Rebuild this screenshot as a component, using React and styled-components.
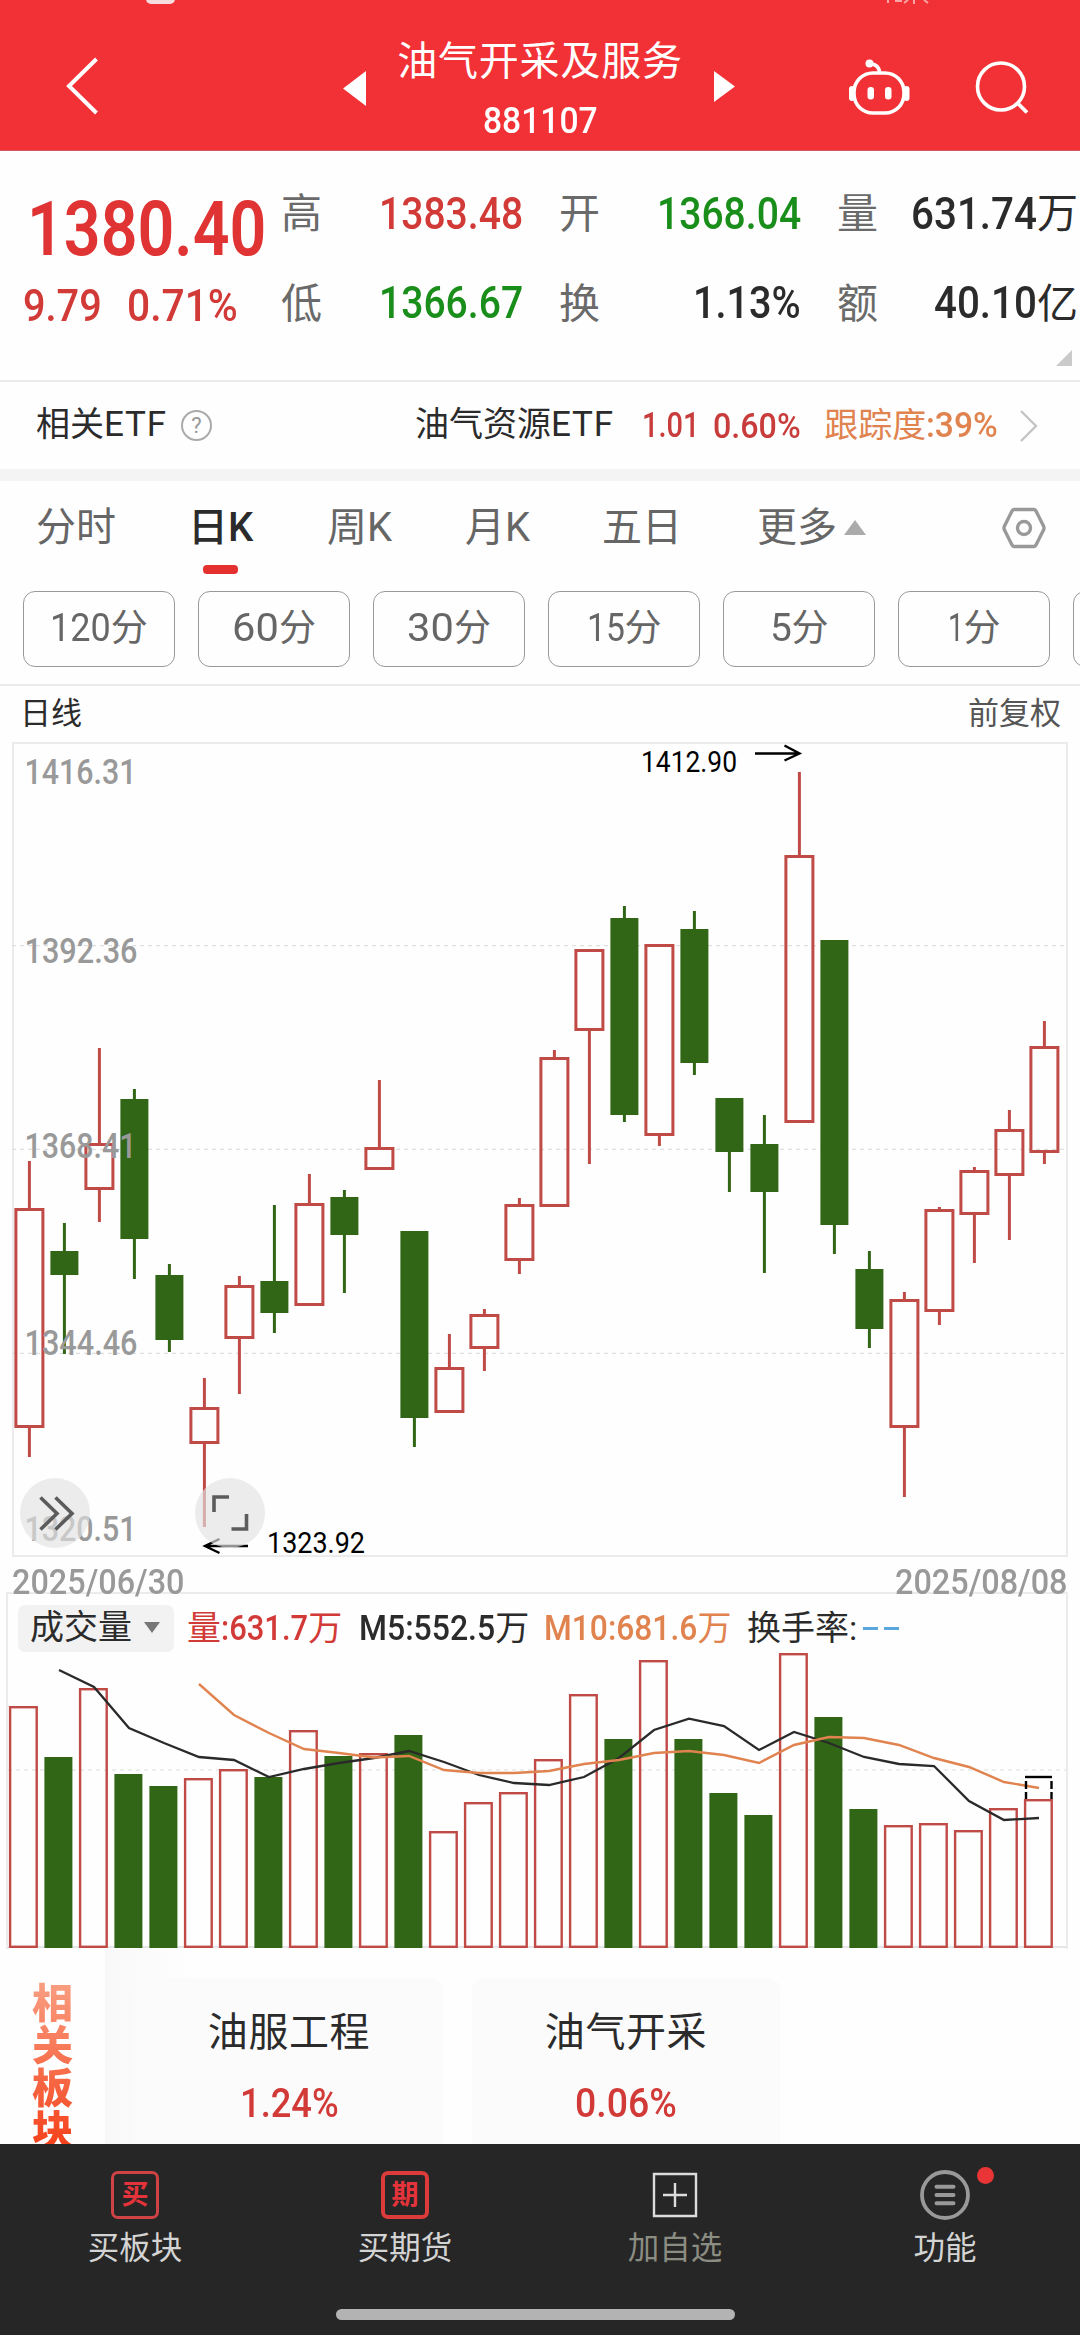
import styled, { createGlobalStyle } from 'styled-components'

const RED = '#d23a38'
const CANDLE_RED = '#c04a45'
const GREEN = '#1a8e1a'
const CANDLE_GREEN = '#306615'
const ORANGE = '#e0834f'
const STEP = 35

// type, high, top, bottom, low
const candles = [
    ['up', 1161, 1208, 1428, 1457],
    ['down', 1223, 1251, 1275, 1354],
    ['up', 1048, 1143, 1190, 1222],
    ['down', 1089, 1099, 1239, 1279],
    ['down', 1264, 1275, 1340, 1352],
    ['up', 1378, 1407, 1444, 1527],
    ['up', 1276, 1285, 1339, 1394],
    ['down', 1205, 1281, 1313, 1333],
    ['up', 1174, 1203, 1306, 1306],
    ['down', 1190, 1197, 1235, 1293],
    ['up', 1080, 1147, 1170, 1170],
    ['down', 1231, 1231, 1418, 1447],
    ['up', 1334, 1367, 1413, 1413],
    ['up', 1309, 1314, 1349, 1371],
    ['up', 1198, 1204, 1261, 1274],
    ['up', 1050, 1057, 1207, 1207],
    ['up', 949, 949, 1031, 1164],
    ['down', 906, 918, 1115, 1122],
    ['up', 944, 944, 1136, 1146],
    ['down', 911, 929, 1063, 1075],
    ['down', 1098, 1098, 1152, 1192],
    ['down', 1115, 1144, 1192, 1273],
    ['up', 772, 855, 1123, 1123],
    ['down', 940, 940, 1225, 1254],
    ['down', 1251, 1269, 1329, 1348],
    ['up', 1292, 1299, 1428, 1497],
    ['up', 1207, 1209, 1312, 1325],
    ['up', 1167, 1170, 1215, 1263],
    ['up', 1110, 1129, 1176, 1240],
    ['up', 1021, 1046, 1153, 1164],
]

const volumes = [
    1706, 1757, 1688, 1774, 1786, 1778, 1769, 1777, 1730, 1756, 1753, 1735,
    1831, 1802, 1792, 1759, 1694, 1739, 1660, 1739, 1793, 1815, 1653, 1717,
    1809, 1825, 1823, 1830, 1808, 1799,
]

const m5 = [
    1670, 1687, 1728, 1743, 1757, 1760, 1777, 1769, 1763, 1758, 1751, 1762,
    1775, 1783, 1785, 1777, 1758, 1730, 1718.7, 1726, 1750, 1732, 1743, 1757,
    1764, 1766, 1801, 1820, 1818,
]

const m10 = [
    1684, 1715, 1733, 1749, 1753, 1757.5, 1756, 1770, 1773, 1773, 1771, 1764,
    1760, 1753, 1751, 1755, 1763, 1745, 1737, 1738, 1745, 1758, 1767, 1782,
    1788,
]

const priceLabels = [
    ['1416.31', 784, 112],
    ['1392.36', 963, 113],
    ['1368.41', 1158, 112],
    ['1344.46', 1355, 113],
    ['1320.51', 1541, 112],
]

const quotes = [
    { label: '高', value: '1383.48', width: 143, color: RED },
    { label: '开', value: '1368.04', width: 143, color: GREEN },
    { label: '量', value: '631.74', width: 125, unit: '万', color: '#2b2b2b' },
    { label: '低', value: '1366.67', width: 143, color: GREEN },
    { label: '换', value: '1.13%', width: 107, color: '#2b2b2b' },
    { label: '额', value: '40.10', width: 102, unit: '亿', color: '#2b2b2b' },
]

const tabs = [
    ['分时', 152],
    ['日K', 139],
    ['周K', 138],
    ['月K', 137],
    ['五日', 155],
    ['更多', 87],
]

const periods = [
    ['120', 61],
    ['60', 47],
    ['30', 47],
    ['15', 38],
    ['5', 22],
    ['1', 16],
    ['', 0],
]

const sectors = [
    ['油服工程', '1.24%', 98],
    ['油气开采', '0.06%', 101],
]

// digit advances of Roboto, in em
const advances = { '.': 0.27, '%': 0.735, '/': 0.38, ':': 0.25, ' ': 0.25, M: 0.876 }

// a condensed number: drawn at its natural width, then squeezed to `width`
const Figure = ({ children, size, width, color, weight }) => {
    const natural =
        size *
        [...children].reduce((sum, c) => sum + (advances[c] || 0.565), 0)
    return (
        <Squeezed
            $size={size}
            $color={color}
            $weight={weight}
            $scale={width / natural}
            $slack={width - natural}
        >
            {children}
        </Squeezed>
    )
}

// moving average points, `from` is the index of the first one
const average = (values, from, top) =>
    values.map((y, i) => `${24 + (i + from) * STEP},${y - top}`).join(' ')

const PriceChart = () => (
    <svg width="1056" height="815" viewBox="12 742 1056 815">
        <rect x="13" y="743" width="1054" height="813" fill="none" stroke="#ebebeb" strokeWidth="2" />
        {[945.7, 1149.3, 1353.3].map((y) => (
            <line key={y} x1="12" x2="1066" y1={y} y2={y} stroke="#dfdfdf" strokeWidth="1.2" strokeDasharray="4 4" />
        ))}
        {candles.map(([type, high, top, bottom, low], i) => {
            const x = 29.4 + i * STEP
            const color = type === 'up' ? CANDLE_RED : CANDLE_GREEN
            return (
                <g key={i} stroke={color} strokeWidth="3">
                    {high < top && <line x1={x} x2={x} y1={high} y2={top + 1} />}
                    {low > bottom && <line x1={x} x2={x} y1={bottom - 1} y2={low} />}
                    {type === 'up' ? (
                        <rect x={x - 13.5} y={top + 1.5} width="27" height={bottom - top - 3} fill="none" />
                    ) : (
                        <rect x={x - 14} y={top} width="28" height={bottom - top} fill={color} stroke="none" />
                    )}
                </g>
            )
        })}
        {priceLabels.map(([text, y, width]) => (
            <AxisText key={text} x="24.5" y={y} textLength={width} lengthAdjust="spacingAndGlyphs">
                {text}
            </AxisText>
        ))}
        <g fill="none" stroke="#000" strokeWidth="2.4">
            <path d="M755 753.5H799M784.5 745.5L799.5 753.5L784.5 760.5" />
            <path d="M248 1546H205M219.5 1539L205 1546L219.5 1553" />
        </g>
        <PeakText x="641" y="772" textLength="96" lengthAdjust="spacingAndGlyphs">1412.90</PeakText>
        <PeakText x="267" y="1553" textLength="98" lengthAdjust="spacingAndGlyphs">1323.92</PeakText>
        <circle cx="55" cy="1513" r="35" fill="rgba(226,226,226,.65)" />
        <circle cx="230" cy="1513" r="35" fill="rgba(226,226,226,.65)" />
        <g fill="none" stroke="#5c5c5c" strokeWidth="3.6">
            <path d="M40.5 1497.5L57 1513.5L40.5 1529.5M55.5 1497.5L72 1513.5L55.5 1529.5" />
            <path d="M214 1512V1497H229M246.5 1514V1529H231.5" />
        </g>
    </svg>
)

// the drawing starts right below the indicator bar
const VolumeChart = () => {
    const top = 1652
    return (
        <svg width="1058" height="297" viewBox="8 0 1058 297">
            <line x1="8" x2="1066" y1="118" y2="118" stroke="#e8e8e8" strokeWidth="1.6" strokeDasharray="4 4" />
            <line x1="8" x2="1066" y1="295" y2="295" stroke="#e6e6e6" strokeWidth="2" />
            {volumes.map((y, i) => {
                const x = 23.4 + i * STEP
                return candles[i][0] === 'up' ? (
                    <rect
                        key={i}
                        x={x - 13.3}
                        y={y - top + 1.2}
                        width="26.6"
                        height={1948 - y - 2.4}
                        fill="none"
                        stroke={CANDLE_RED}
                        strokeWidth="2.4"
                    />
                ) : (
                    <rect key={i} x={x - 14} y={y - top} width="28" height={1948 - y} fill={CANDLE_GREEN} />
                )
            })}
            <polyline points={average(m5, 1, top)} fill="none" stroke="#2a2a2a" strokeWidth="2.3" />
            <polyline points={average(m10, 5, top)} fill="none" stroke={ORANGE} strokeWidth="2.4" />
            <g stroke="#000" strokeWidth="2.4">
                <path d="M1025 125H1052" />
                <path d="M1026 129V137M1026 140V147M1051.5 129V137M1051.5 140V147" />
            </g>
        </svg>
    )
}

const App = () => (
    <Page>
        <GlobalStyle />
        <Header>
            <svg width="1080" height="6">
                <rect x="146" y="-8" width="29" height="12" rx="5" fill="#f6dcdc" />
                <path d="M888 0V3M895 1H902M908 0L904 3M914 0V4M924 0L928 3" stroke="#f7a5a6" strokeWidth="2" />
            </svg>
            <HeaderBar>
                <BackButton>
                    <svg width="34" height="58" viewBox="0 0 34 58">
                        <path d="M31.5 2L4 29L31.5 56" fill="none" stroke="#fff" strokeWidth="4" />
                    </svg>
                </BackButton>
                <Switcher>
                    <svg width="23" height="36">
                        <path d="M23 0V35L0 17.5Z" fill="#fff" />
                    </svg>
                    <Titles>
                        <h1>油气开采及服务</h1>
                        <Figure size={37} width={114} color="#fff">
                            881107
                        </Figure>
                    </Titles>
                    <svg width="21" height="32">
                        <path d="M0 0V31L21 15.5Z" fill="#fff" />
                    </svg>
                </Switcher>
                <HeaderIcons>
                    <svg width="62" height="58" viewBox="848 58 62 58">
                        <g fill="none" stroke="#fff" strokeWidth="3.6">
                            <rect x="854" y="73" width="50" height="40" rx="19" />
                            <path d="M869 63.5C875 64 879.5 67 879.5 73" />
                        </g>
                        <circle cx="869.5" cy="63.5" r="4" fill="#fff" />
                        <rect x="849" y="86" width="6" height="15" rx="3" fill="#fff" />
                        <rect x="903.5" y="86" width="6" height="15" rx="3" fill="#fff" />
                        <rect x="867.5" y="87" width="6.5" height="12.5" rx="3" fill="#fff" />
                        <rect x="885" y="87" width="6.5" height="12.5" rx="3" fill="#fff" />
                    </svg>
                    <svg width="54" height="54" viewBox="975 60 54 54">
                        <circle cx="1001" cy="86.5" r="23.5" fill="none" stroke="#fff" strokeWidth="3.6" />
                        <path d="M1017.5 103L1027 112.5" stroke="#fff" strokeWidth="3.8" />
                    </svg>
                </HeaderIcons>
            </HeaderBar>
        </Header>

        <Quote>
            <Price>
                <Figure size={76} width={236} color="#e03333" weight={600}>
                    1380.40
                </Figure>
                <Change>
                    <Figure size={43.5} width={78} color={RED}>
                        9.79
                    </Figure>
                    <Figure size={43.5} width={110} color={RED}>
                        0.71%
                    </Figure>
                </Change>
            </Price>
            <Stats>
                {quotes.map((q) => (
                    <Stat key={q.label}>
                        <span>{q.label}</span>
                        <StatValue $color={q.color}>
                            <Figure size={44.5} width={q.width} color={q.color}>
                                {q.value}
                            </Figure>
                            {q.unit}
                        </StatValue>
                    </Stat>
                ))}
            </Stats>
            <Corner />
        </Quote>

        <EtfRow>
            <EtfLabel>
                相关<b>ETF</b>
            </EtfLabel>
            <Help>?</Help>
            <EtfName>
                油气资源<b>ETF</b>
            </EtfName>
            <Figure size={35} width={57} color="#c83c3c">
                1.01
            </Figure>
            <EtfRate>
                <Figure size={35} width={87} color="#c83c3c">
                    0.60%
                </Figure>
            </EtfRate>
            <Tracking>
                跟踪度
                <Figure size={35} width={71} color={ORANGE}>
                    :39%
                </Figure>
            </Tracking>
            <svg width="20" height="32">
                <path d="M2 1L17 16L2 31" fill="none" stroke="#c4c4c4" strokeWidth="2.4" />
            </svg>
        </EtfRow>

        <Tabs>
            {tabs.map(([name, width], i) => (
                <Tab key={name} $width={width} $active={i === 1}>
                    {name}
                </Tab>
            ))}
            <Triangle $size={11} $height={15} $color="#ababab" $up />
            <Settings width="44" height="44" viewBox="1002 506 44 44">
                <path
                    d="M1014 509.5H1034Q1035 509.5 1036 511L1043.5 526Q1044.5 528 1043.5 530L1036 545Q1035 546.5 1034 546.5H1014Q1013 546.5 1012 545L1004.5 530Q1003.5 528 1004.5 526L1012 511Q1013 509.5 1014 509.5Z"
                    fill="none"
                    stroke="#999"
                    strokeWidth="3.4"
                />
                <circle cx="1024" cy="528" r="6.5" fill="none" stroke="#999" strokeWidth="3.4" />
            </Settings>
        </Tabs>

        <Periods>
            {periods.map(([n, width]) => (
                <Period key={n}>
                    {n && (
                        <>
                            <Figure size={39} width={width} color="#666" weight={400}>
                                {n}
                            </Figure>
                            分
                        </>
                    )}
                </Period>
            ))}
        </Periods>

        <ChartCaption>
            <span>日线</span>
            <em>前复权</em>
        </ChartCaption>
        <PriceArea>
            <PriceChart />
        </PriceArea>
        <Dates>
            <Figure size={35} width={171} color="#999">
                2025/06/30
            </Figure>
            <Figure size={35} width={171} color="#999">
                2025/08/08
            </Figure>
        </Dates>

        <VolumePanel>
            <Indicators>
                <Picker>
                    成交量
                    <Triangle $size={8} $height={11} $color="#777" />
                </Picker>
                <Indicator $width={172} $color={RED}>
                    量
                    <Figure size={35} width={86} color={RED}>
                        :631.7
                    </Figure>
                    万
                </Indicator>
                <Indicator $width={185} $color="#2b2b2b">
                    <Figure size={35} width={135} color="#2b2b2b">
                        M5:552.5
                    </Figure>
                    万
                </Indicator>
                <Indicator $width={203} $color={ORANGE}>
                    <Figure size={35} width={152} color={ORANGE}>
                        M10:681.6
                    </Figure>
                    万
                </Indicator>
                <Indicator $width={116} $color="#2b2b2b">
                    换手率:
                </Indicator>
                <Dash />
                <Dash />
            </Indicators>
            <VolumeChart />
        </VolumePanel>

        <Related>
            <RelatedTitle>
                {[...'相关板块'].map((c) => (
                    <span key={c}>{c}</span>
                ))}
            </RelatedTitle>
            <Sectors>
                {sectors.map(([name, rate, width]) => (
                    <Sector key={name}>
                        <h2>{name}</h2>
                        <Figure size={40.5} width={width} color={RED}>
                            {rate}
                        </Figure>
                    </Sector>
                ))}
            </Sectors>
        </Related>

        <Footer>
            <Nav>
                <NavItem>
                    <Stamp $color="#cf4345" $line={3}>
                        买
                    </Stamp>
                    买板块
                </NavItem>
                <NavItem>
                    <Stamp $color="#dc3b3b" $line={4}>
                        期
                    </Stamp>
                    买期货
                </NavItem>
                <NavItem $dim>
                    <svg width="50" height="50">
                        <path d="M4 4H46V46H4ZM25 13V37M13 25H37" fill="none" stroke="#dcdcdc" strokeWidth="2.4" />
                    </svg>
                    加自选
                </NavItem>
                <NavItem>
                    <Dot />
                    <svg width="50" height="50">
                        <circle cx="25" cy="25" r="23" fill="none" stroke="#999" strokeWidth="3.8" />
                        <path d="M16.5 16.7H33.5M16.5 25H33.5M16.5 33.3H33.5" stroke="#999" strokeWidth="4" strokeLinecap="round" />
                    </svg>
                    功能
                </NavItem>
            </Nav>
            <HomeBar />
        </Footer>
    </Page>
)

const GlobalStyle = createGlobalStyle`
    * {
        box-sizing: border-box;
    }
    body {
        margin: 0;
        background: #fff;
        font-family: Roboto, "Noto Sans CJK SC", sans-serif;
    }
    h1, h2 {
        margin: 0;
        font-weight: 400;
    }
    svg {
        display: block;
        flex: none;
    }
`
const Page = styled.div`
    width: 1080px;
    height: 2335px;
    overflow: hidden;
    background: #fefefe;
    display: flex;
    flex-direction: column;
    > * {
        flex: none;
    }
`
const Squeezed = styled.span`
    display: inline-block;
    white-space: pre;
    line-height: 1;
    font-family: Roboto, sans-serif;
    font-size: ${(p) => p.$size}px;
    font-weight: ${(p) => p.$weight || 500};
    color: ${(p) => p.$color};
    transform: scaleX(${(p) => p.$scale});
    transform-origin: left center;
    margin-right: ${(p) => p.$slack}px;
`
const AxisText = styled.text`
    font-family: Roboto, sans-serif;
    font-size: 35px;
    font-weight: 500;
    fill: #999;
`
const PeakText = styled.text`
    font-family: Roboto, sans-serif;
    font-size: 30px;
    fill: #000;
`
const Header = styled.header`
    height: 151px;
    background: #f23136;
    border-bottom: 1px solid #d05a5c;
`
const HeaderBar = styled.div`
    height: 144px;
    display: grid;
    grid-template-columns: 340px 400px 1fr;
`
const BackButton = styled.div`
    padding: 51px 0 0 65px;
`
const Switcher = styled.div`
    display: flex;
    justify-content: space-between;
    padding: 0 5px 0 3px;
    > svg {
        margin-top: 65px;
    }
`
const Titles = styled.div`
    display: flex;
    flex-direction: column;
    align-items: center;
    padding-top: 31px;
    h1 {
        font-size: 40px;
        line-height: 50px;
        letter-spacing: 0.8px;
        color: #fff;
        margin-bottom: 15px;
    }
`
const HeaderIcons = styled.div`
    display: flex;
    padding: 52px 0 0 108px;
    gap: 65px;
    svg:last-child {
        margin-top: 2px;
    }
`
const Quote = styled.section`
    height: 231px;
    position: relative;
    display: flex;
    border-bottom: 2px solid #ececec;
`
const Price = styled.div`
    width: 281px;
    padding: 40px 0 0 27px;
`
const Change = styled.div`
    display: flex;
    gap: 25px;
    margin: 18px 0 0 -4px;
`
const Stats = styled.div`
    width: 799px;
    height: 182px;
    padding-top: 18px;
    display: grid;
    grid-template-columns: 242px 242px 241px;
    grid-template-rows: 89.5px 89.5px;
    column-gap: 36px;
`
const Stat = styled.div`
    height: 90px;
    display: flex;
    justify-content: space-between;
    align-items: center;
    font-size: 41px;
    line-height: 90px;
    color: #6a6a6a;
`
const StatValue = styled.div`
    display: flex;
    align-items: center;
    color: ${(p) => p.$color};
`
const Corner = styled.i`
    position: absolute;
    right: 8px;
    bottom: 14px;
    border-left: 16px solid transparent;
    border-bottom: 16px solid #cacaca;
`
const EtfRow = styled.section`
    height: 99px;
    display: flex;
    align-items: center;
    padding-left: 36px;
    border-bottom: 12px solid #f4f4f4;
    font-size: 34px;
    line-height: 50px;
    color: #2b2b2b;
    b {
        font-weight: 400;
        font-size: 35px;
        letter-spacing: 0.8px;
    }
`
const EtfLabel = styled.div`
    width: 145px;
    padding-bottom: 2px;
    white-space: nowrap;
`
const Help = styled.div`
    width: 31px;
    height: 31px;
    border: 2px solid #aaa;
    border-radius: 50%;
    font-size: 22px;
    line-height: 27px;
    text-align: center;
    color: #999;
`
const EtfName = styled.div`
    width: 227px;
    margin-left: 203px;
    padding-bottom: 2px;
    white-space: nowrap;
`
const EtfRate = styled.div`
    margin: 0 24px 0 13px;
`
const Tracking = styled.div`
    width: 195px;
    padding-bottom: 1px;
    display: flex;
    align-items: center;
    color: ${ORANGE};
`
const Triangle = styled.i`
    flex: none;
    border-left: ${(p) => p.$size}px solid transparent;
    border-right: ${(p) => p.$size}px solid transparent;
    ${(p) => (p.$up ? 'border-bottom' : 'border-top')}: ${(p) =>
        `${p.$height}px solid ${p.$color}`};
`
const Tabs = styled.nav`
    height: 110px;
    display: flex;
    align-items: center;
    padding: 0 34px 17px 36px;
`
const Tab = styled.div`
    width: ${(p) => p.$width}px;
    font-size: 40px;
    line-height: 60px;
    font-weight: ${(p) => (p.$active ? 500 : 400)};
    color: ${(p) => (p.$active ? '#2b2b2b' : '#666')};
    position: relative;
    &::after {
        content: '';
        display: ${(p) => (p.$active ? 'block' : 'none')};
        position: absolute;
        left: 15px;
        bottom: -16px;
        width: 35px;
        height: 9px;
        border-radius: 4px;
        background: #e53030;
    }
`
const Settings = styled.svg`
    margin-left: auto;
`
const Periods = styled.div`
    height: 95px;
    padding-left: 23px;
    display: flex;
    gap: 23px;
    overflow: hidden;
    border-bottom: 2px solid #ececec;
`
const Period = styled.div`
    flex: none;
    width: 152px;
    height: 76px;
    border: 1.5px solid #999;
    border-radius: 12px;
    display: flex;
    align-items: center;
    justify-content: center;
    font-size: 37px;
    line-height: 50px;
    color: #666;
    padding-bottom: 1px;
`
const ChartCaption = styled.div`
    height: 56px;
    padding: 0 19px 0 20px;
    display: flex;
    justify-content: space-between;
    font-size: 31px;
    line-height: 56px;
    color: #2b2b2b;
    em {
        font-style: normal;
        color: #555;
    }
`
const PriceArea = styled.div`
    height: 815px;
    padding-left: 12px;
`
const Dates = styled.div`
    height: 35px;
    padding: 8px 12px 0 12px;
    display: flex;
    justify-content: space-between;
`
const VolumePanel = styled.section`
    height: 357px;
    margin: 0 12px 0 6px;
    border: 2px solid #ebebeb;
    border-bottom: none;
`
const Indicators = styled.div`
    height: 58px;
    display: flex;
    align-items: center;
    padding: 10px 0 0 10px;
`
const Picker = styled.div`
    width: 156px;
    height: 47px;
    margin-right: 13px;
    border-radius: 7px;
    background: #f2f2f2;
    display: flex;
    align-items: center;
    justify-content: space-between;
    padding: 0 14px 2px 12px;
    font-size: 34px;
    line-height: 45px;
    color: #2b2b2b;
`
const Indicator = styled.div`
    width: ${(p) => p.$width}px;
    display: flex;
    align-items: center;
    font-size: 34px;
    line-height: 46px;
    color: ${(p) => p.$color};
    white-space: nowrap;
`
const Dash = styled.i`
    width: 15px;
    height: 3px;
    margin-right: 6px;
    background: #5aa7dd;
`
const Related = styled.section`
    height: 195px;
    display: flex;
    overflow: hidden;
`
const RelatedTitle = styled.div`
    width: 105px;
    height: 237px;
    padding: 34px 0 0 32px;
    display: flex;
    flex-direction: column;
    font-size: 41px;
    line-height: 42.3px;
    font-weight: 900;
    background: linear-gradient(#f9a083 30px, #f5431c 195px);
    background-clip: text;
    color: transparent;
`
const Sectors = styled.div`
    flex: 1;
    display: flex;
    gap: 29px;
    padding: 29px 0 0 30px;
    background: linear-gradient(90deg, #f8f8f8, #fefefe 85px);
`
const Sector = styled.div`
    width: 308px;
    height: 200px;
    border-radius: 12px;
    background: #fbfbfb;
    display: flex;
    flex-direction: column;
    align-items: center;
    padding-top: 25px;
    h2 {
        font-size: 40px;
        line-height: 60px;
        letter-spacing: 0.6px;
        color: #2b2b2b;
        margin-bottom: 20px;
    }
`
const Footer = styled.footer`
    height: 191px;
    background: #262626;
`
const Nav = styled.nav`
    height: 165px;
    display: grid;
    grid-template-columns: repeat(4, 1fr);
`
const NavItem = styled.div`
    position: relative;
    display: flex;
    flex-direction: column;
    align-items: center;
    gap: 6px;
    padding-top: 26px;
    font-size: 31.5px;
    line-height: 46px;
    color: ${(p) => (p.$dim ? '#8c8d82' : '#d4d4d4')};
`
const Stamp = styled.div`
    width: 48px;
    height: 48px;
    margin: 1px;
    border: ${(p) => p.$line}px solid ${(p) => p.$color};
    border-radius: 7px;
    display: flex;
    align-items: center;
    justify-content: center;
    font-size: 27px;
    line-height: 27px;
    font-weight: 700;
    color: #e5333c;
`
const Dot = styled.i`
    position: absolute;
    left: 167px;
    top: 23px;
    width: 17px;
    height: 17px;
    border-radius: 50%;
    background: #e93535;
`
const HomeBar = styled.div`
    width: 399px;
    height: 11px;
    margin-left: 336px;
    border-radius: 6px;
    background: #b3b3b3;
`

export default App
